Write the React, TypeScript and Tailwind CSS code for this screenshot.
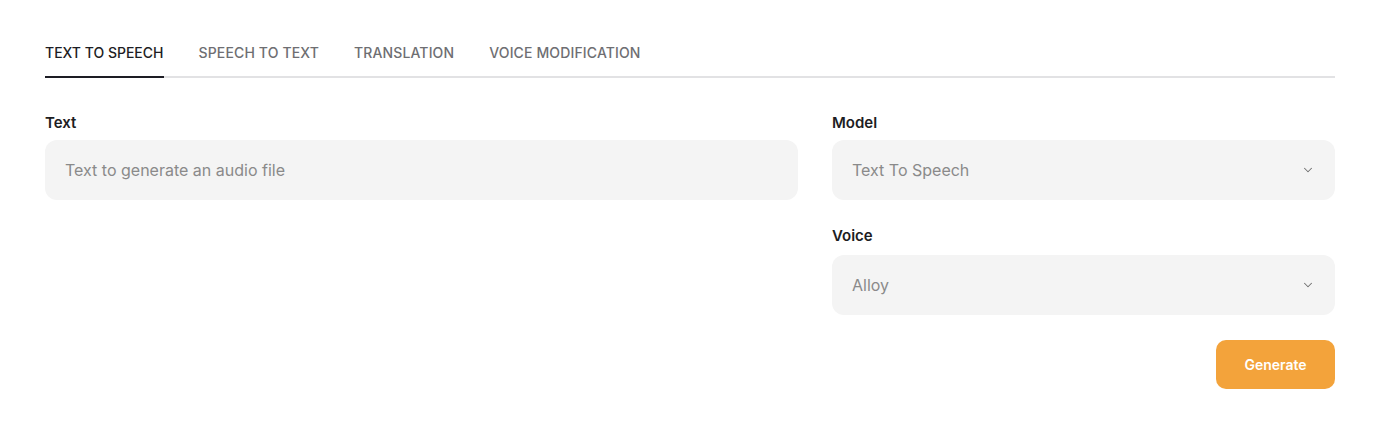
import { ChevronDown } from 'lucide-react';

const tabs = ['Text to Speech', 'Speech to Text', 'Translation', 'Voice Modification'];

function SelectBox({ value }: { value: string }) {
  return (
    <div className="flex h-[60px] items-center justify-between rounded-xl bg-[#f4f4f4] pl-5 pr-5 text-base text-[#8a8a8a]">
      <span>{value}</span>
      <ChevronDown className="h-[14px] w-[14px] text-[#6f6f6f]" strokeWidth={1.75} />
    </div>
  );
}

export default function App() {
  return (
    <div className="min-h-screen bg-white pl-[45px] pr-[49px] pt-[43px] text-[#1d1d22]" style={{ fontFamily: 'Inter, "Noto Sans", sans-serif' }}>
      <div className="flex gap-[35px] border-b-2 border-[#e2e2e4]">
        {tabs.map((tab, index) => (
          <button
            key={tab}
            type="button"
            className={
              index === 0
                ? '-mb-[2px] border-b-2 border-[#1d1d24] pb-[13px] text-sm font-medium uppercase leading-5 text-[#1d1d24]'
                : '-mb-[2px] border-b-2 border-transparent pb-[13px] text-sm font-medium uppercase leading-5 tracking-[0.01em] text-[#6e6e72]'
            }
          >
            {tab}
          </button>
        ))}
      </div>

      <div className="mt-[34px] grid grid-cols-[753fr_503fr] gap-[34px]">
        <div>
          <p className="mb-[7px] text-[15px] font-semibold leading-[21px]">Text</p>
          <div className="flex h-[60px] items-center rounded-xl bg-[#f4f4f4] px-5 text-base text-[#8a8a8a]">
            Text to generate an audio file
          </div>
        </div>

        <div>
          <p className="mb-[7px] text-[15px] font-semibold leading-[21px]">Model</p>
          <SelectBox value="Text To Speech" />

          <p className="mb-[9px] mt-[26px] text-[15px] font-semibold leading-5">Voice</p>
          <SelectBox value="Alloy" />

          <div className="mt-[25px] flex justify-end">
            <button type="button" className="h-[49px] w-[119px] rounded-[10px] bg-[#f3a33b] text-sm font-semibold text-white">
              Generate
            </button>
          </div>
        </div>
      </div>
    </div>
  );
}
